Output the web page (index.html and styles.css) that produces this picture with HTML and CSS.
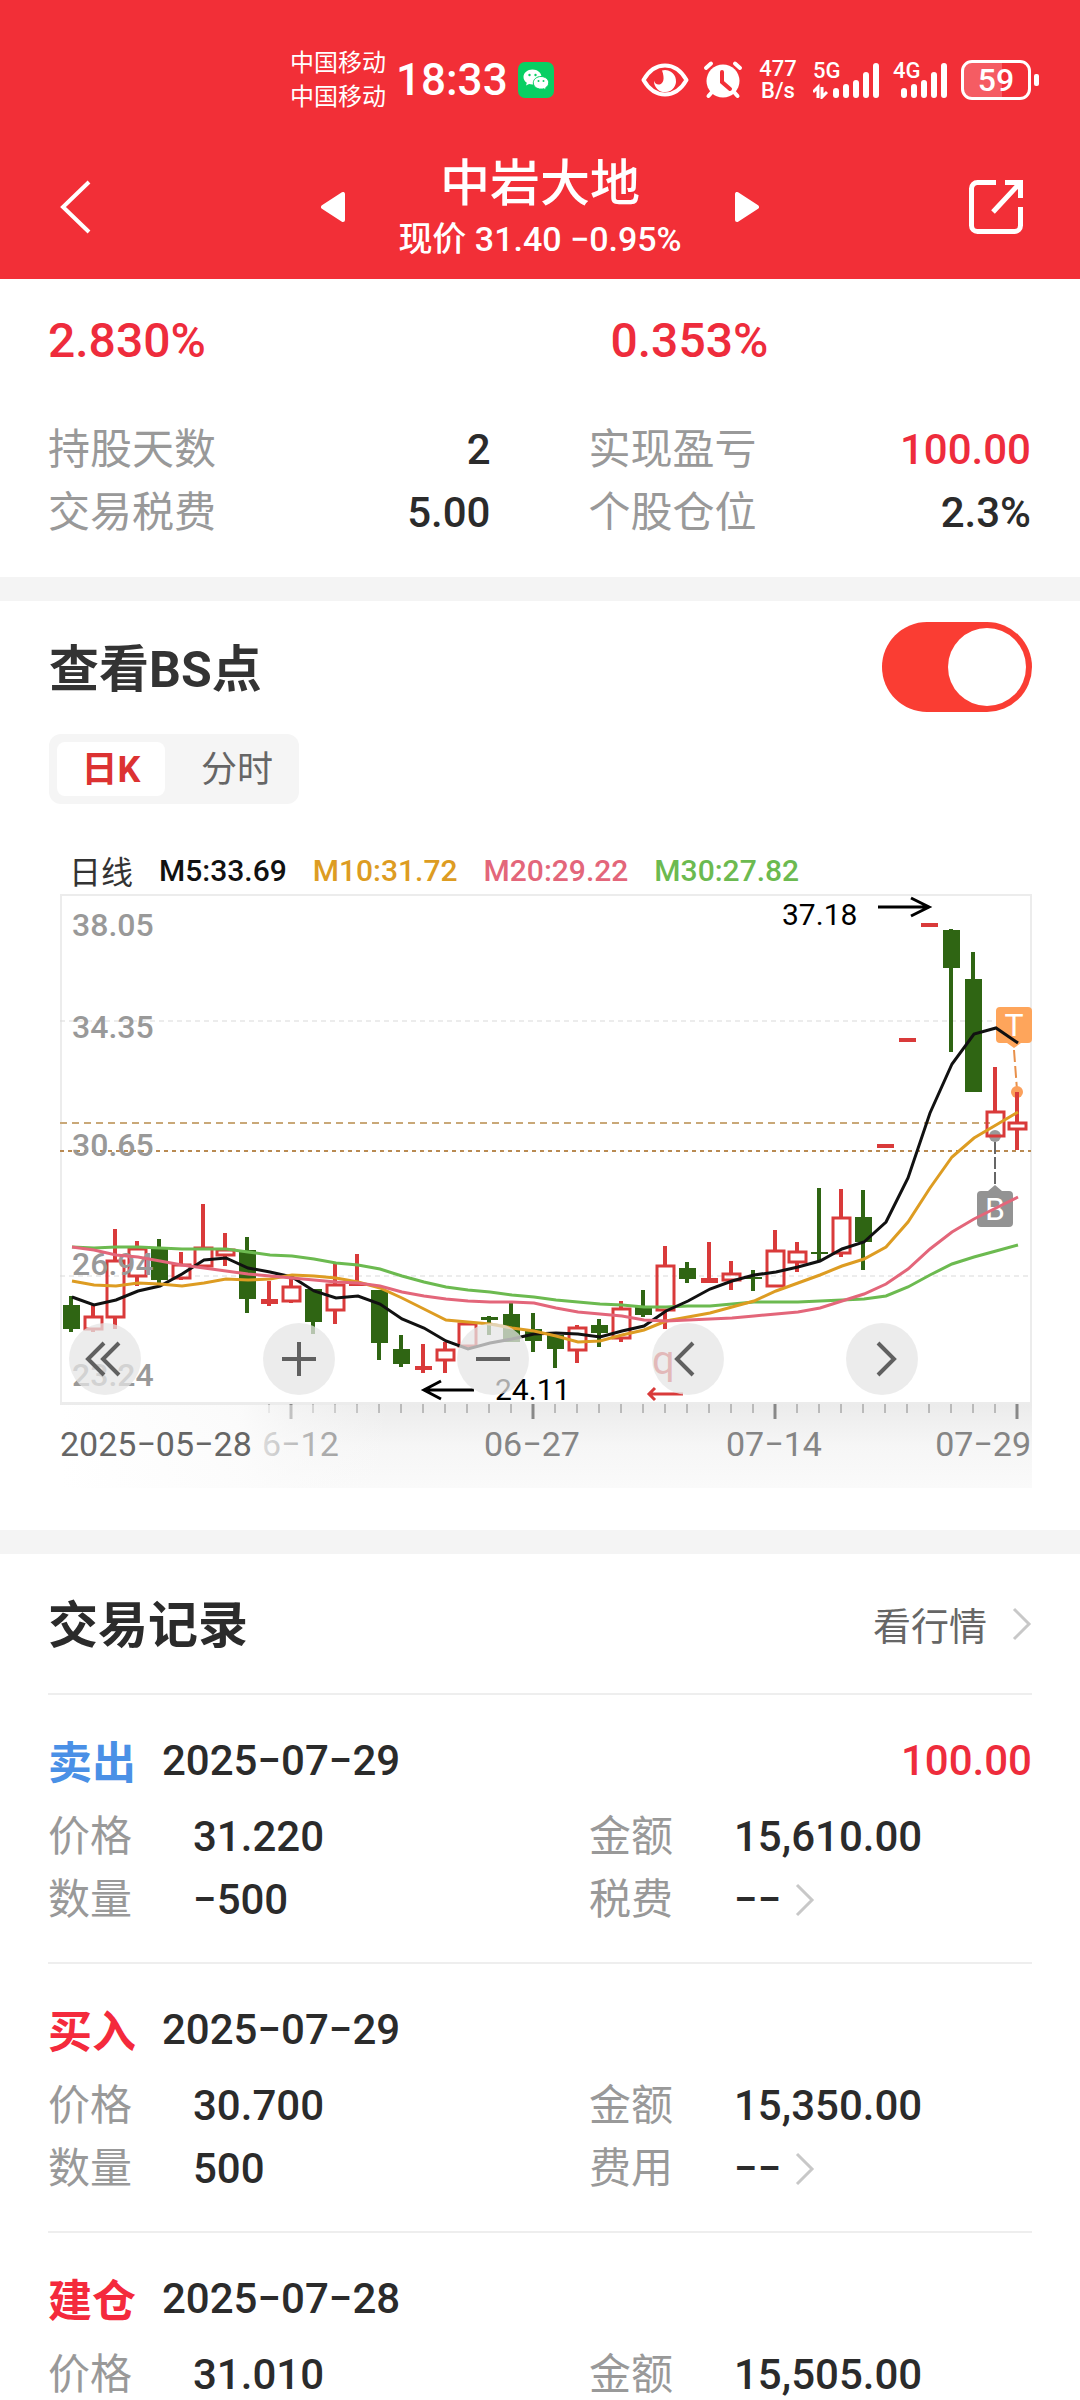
FILE: index.html
```html
<!DOCTYPE html>
<html lang="zh-CN">
<head>
<meta charset="utf-8">
<meta name="viewport" content="width=device-width">
<title>中岩大地</title>
<link rel="stylesheet" href="styles.css">
</head>
<body>
<div class="app">
  <header class="header">
    <div class="status">
      <div class="status-left">
        <div class="carriers"><span>中国移动</span><span>中国移动</span></div>
        <span class="clock">18:33</span>
        <svg class="wechat" width="36" height="36" viewBox="0 0 36 36">
          <rect width="36" height="36" rx="7" fill="#08cf63"/>
          <path d="M14.500 7.500c-5 0-9 3.300-9 7.500 0 2.400 1.300 4.400 3.300 5.800l-.8 2.600 3.100-1.500c1 .3 2.200.5 3.400.5 5 0 9-3.300 9-7.400s-4-7.500-9-7.500z" fill="#fff"/>
          <path d="M23 14.500c-4.300 0-7.700 2.800-7.700 6.300s3.400 6.300 7.700 6.300c1 0 1.900-.1 2.700-.4l2.600 1.300-.7-2.200c1.900-1.200 3.100-3 3.100-5 0-3.500-3.400-6.300-7.700-6.300z" fill="#fff" stroke="#08cf63"/>
          <g fill="#08cf63"><circle cx="11.500" cy="13" r="1.200"/><circle cx="17.500" cy="13" r="1.200"/><circle cx="20.500" cy="19" r="1"/><circle cx="25.500" cy="19" r="1"/></g>
        </svg>
      </div>
      <div class="status-right">
        <svg width="48" height="36" viewBox="0 0 48 36">
          <path d="M2.500 18C8 8.500 15 3.500 24 3.500S40 8.500 45.500 18C40 27.500 33 32.500 24 32.500S8 27.500 2.500 18z" fill="none" stroke="#fff" stroke-width="4" stroke-linejoin="round"/>
          <path d="M21 8.500a11 11 0 1 1-8 10c.5 3 3 4.500 5.500 4 4-1 5.500-6 2.500-14z" fill="#fff"/>
        </svg>
        <svg width="40" height="40" viewBox="0 0 40 40">
          <g stroke="#fff" stroke-width="4" stroke-linecap="round"><path d="M3 8l5-4.500M37 8l-5-4.500M9 32l-3.500 4M31 32l3.500 4"/></g>
          <circle cx="20" cy="21" r="16.500" fill="#fff"/>
          <path d="M19 12v10l8 7" fill="none" stroke="#f22f37" stroke-width="4" stroke-linecap="round"/>
        </svg>
        <div class="speed"><span>477</span><span>B/s</span></div>
        <div class="signal">
          <span>5G</span>
          <svg width="66" height="38" viewBox="0 0 66 38">
            <path d="M0 31l5-5v11M14 31l-5 5V26" fill="none" stroke="#fff" stroke-width="3"/>
            <g stroke="#fff" stroke-width="6" stroke-linecap="round"><path d="M23 30v4M33 26v8M43 22v12M53 14v20M63 5v29"/></g>
          </svg>
        </div>
        <div class="signal">
          <span>4G</span>
          <svg width="54" height="38" viewBox="0 0 54 38">
            <g stroke="#fff" stroke-width="6" stroke-linecap="round"><path d="M11 30v4M21 26v8M31 22v12M41 14v20M51 5v29"/></g>
          </svg>
        </div>
        <div class="battery"><span>59</span></div>
      </div>
    </div>
    <nav class="nav">
      <button class="icon-btn nav-back" aria-label="返回">
        <svg width="36" height="56" viewBox="0 0 36 56"><path d="M33 3L7 28l26 25" fill="none" stroke="#fff" stroke-width="4"/></svg>
      </button>
      <div class="nav-center">
        <button class="icon-btn" aria-label="上一只">
          <svg width="24" height="30" viewBox="0 0 24 30"><path d="M2 15L22 2v26z" fill="#fff" stroke="#fff" stroke-width="4" stroke-linejoin="round"/></svg>
        </button>
        <div class="nav-title">
          <h1>中岩大地</h1>
          <p>现价 31.40 −0.95%</p>
        </div>
        <button class="icon-btn" aria-label="下一只">
          <svg width="24" height="30" viewBox="0 0 24 30"><path d="M22 15L2 2v26z" fill="#fff" stroke="#fff" stroke-width="4" stroke-linejoin="round"/></svg>
        </button>
      </div>
      <button class="icon-btn nav-share" aria-label="分享">
        <svg width="56" height="56" viewBox="0 0 56 56">
          <g fill="none" stroke="#fff" stroke-width="5"><path d="M28 3.500H9.500a6 6 0 0 0-6 6v37a6 6 0 0 0 6 6h37a6 6 0 0 0 6-6V28"/><path d="M37 3.500h15.500V19M52 4L25 33"/></g>
        </svg>
      </button>
    </nav>
  </header>

  <main class="content">
    <section class="stats">
      <div class="columns rates"><span>2.830%</span><span class="rate-second">0.353%</span></div>
      <dl class="columns summary">
        <div><dt>持股天数</dt><dd>2</dd></div>
        <div><dt>实现盈亏</dt><dd class="red">100.00</dd></div>
        <div><dt>交易税费</dt><dd>5.00</dd></div>
        <div><dt>个股仓位</dt><dd>2.3%</dd></div>
      </dl>
    </section>

    <section class="kline">
      <div class="kline-head">
        <label for="bs">查看BS点</label>
        <input class="switch" type="checkbox" id="bs" role="switch" checked>
      </div>
      <div class="tabs">
        <button class="tab tab-active">日K</button>
        <button class="tab">分时</button>
      </div>
      <div class="legend">
        <span class="legend-name">日线</span><span class="m5">M5:33.69</span><span class="m10">M10:31.72</span><span class="m20">M20:29.22</span><span class="m30">M30:27.82</span>
      </div>
      <div class="chart">
        <svg class="chart-svg" viewBox="60 892 971 596">
          <defs>
            <linearGradient id="band" x1="0" y1="0" x2="0" y2="1"><stop offset="0" stop-color="#ebebeb"/><stop offset=".5" stop-color="#f6f6f6"/><stop offset="1" stop-color="#fafafa"/></linearGradient>
            <linearGradient id="fade"><stop offset="0" stop-color="#fff"/><stop offset=".55" stop-color="#fcfcfc" stop-opacity=".9"/><stop offset=".7" stop-color="#fbfbfb" stop-opacity=".5"/><stop offset="1" stop-color="#fafafa" stop-opacity="0"/></linearGradient>
          </defs>
          <rect x="60" y="1403" width="972" height="85" fill="url(#band)"/>
          <rect x="61" y="895" width="970" height="508" fill="#fff" stroke="#ececec" stroke-width="2"/>
          <g fill="none">
            <path d="M60 1021H1031M60 1276H1031" stroke="#d9d9d9" stroke-dasharray="5 4"/>
            <path d="M60 1123H990" stroke="#c9a878" stroke-width="2" stroke-dasharray="7 5"/>
            <path d="M60 1151H1031" stroke="#b98a52" stroke-width="2" stroke-dasharray="4 4"/>
          </g>
          <g class="bs-marks">
            <path d="M1014 1050l3 40" stroke="#e8904a" stroke-width="2" stroke-dasharray="12 4"/>
            <circle cx="1017" cy="1092" r="6" fill="#fba05c"/>
            <path d="M1000 1007h28a4 4 0 0 1 4 4v28a4 4 0 0 1-4 4h-7l-7 5-7-5h-7a4 4 0 0 1-4-4v-28a4 4 0 0 1 4-4z" fill="#fea55b"/>
            <text x="1014" y="1036">T</text>
            <path d="M995 1142v44" stroke="#666" stroke-width="2" stroke-dasharray="12 3"/>
            <circle cx="995" cy="1136" r="6" fill="#999"/>
            <path d="M981 1191h7l7-6 7 6h7a4 4 0 0 1 4 4v28a4 4 0 0 1-4 4h-28a4 4 0 0 1-4-4v-28a4 4 0 0 1 4-4z" fill="#939393"/>
            <text x="995" y="1220">B</text>
          </g>
          <g id="candles"></g>
          <g class="scale">
            <text x="72" y="936">38.05</text><text x="72" y="1038">34.35</text><text x="72" y="1156">30.65</text><text x="72" y="1275">26.94</text><text x="72" y="1386">23.24</text>
          </g>
          <g id="averages"></g>
          <g class="extremes">
            <text x="782" y="925">37.18</text><path d="M878 907H929M911 898l18 9-18 9"/>
            <text x="495" y="1400">24.11</text><path d="M474 1390H424M441 1381l-17 9 17 9"/>
          </g>
          <text class="notice" x="652" y="1374">q</text>
          <path d="M683 1394H649M655 1388l-6 6 6 6" fill="none" stroke="#d93a3a" stroke-width="3"/>
          <g id="ticks"></g>
          <g class="dates">
            <text x="262" y="1456">6−12</text><text x="484" y="1456">06−27</text><text x="726" y="1456">07−14</text><text x="1031" y="1456" text-anchor="end">07−29</text>
          </g>
          <rect x="60" y="1405" width="330" height="83" fill="url(#fade)"/>
          <text class="first-date" x="60" y="1456">2025−05−28</text>
        </svg>
        <div class="chart-tools">
          <button aria-label="最早"><svg viewBox="0 0 72 72"><path d="M35 20L19 36l16 16M50 20L34 36l16 16"/></svg></button>
          <button aria-label="放大"><svg viewBox="0 0 72 72"><path d="M36 19v34M19 36h34"/></svg></button>
          <button aria-label="缩小"><svg viewBox="0 0 72 72"><path d="M19 36h34"/></svg></button>
          <button aria-label="向左"><svg viewBox="0 0 72 72"><path d="M41 20L25 36l16 16"/></svg></button>
          <button aria-label="向右"><svg viewBox="0 0 72 72"><path d="M32 20l16 16-16 16"/></svg></button>
        </div>
      </div>
    </section>

    <section class="records">
      <div class="records-head">
        <h2>交易记录</h2>
        <a href="#">看行情<svg width="20" height="34" viewBox="0 0 20 34"><path d="M2 2l15 15L2 32"/></svg></a>
      </div>
      <article class="record">
        <div class="record-head"><strong class="sell">卖出</strong><time>2025−07−29</time><span class="profit">100.00</span></div>
        <dl class="columns">
          <div><dt>价格</dt><dd>31.220</dd></div><div><dt>金额</dt><dd>15,610.00</dd></div>
          <div><dt>数量</dt><dd>−500</dd></div><div><dt>税费</dt><dd>−−<svg width="20" height="34" viewBox="0 0 20 34"><path d="M2 2l15 15L2 32"/></svg></dd></div>
        </dl>
      </article>
      <article class="record">
        <div class="record-head"><strong>买入</strong><time>2025−07−29</time></div>
        <dl class="columns">
          <div><dt>价格</dt><dd>30.700</dd></div><div><dt>金额</dt><dd>15,350.00</dd></div>
          <div><dt>数量</dt><dd>500</dd></div><div><dt>费用</dt><dd>−−<svg width="20" height="34" viewBox="0 0 20 34"><path d="M2 2l15 15L2 32"/></svg></dd></div>
        </dl>
      </article>
      <article class="record">
        <div class="record-head"><strong>建仓</strong><time>2025−07−28</time></div>
        <dl class="columns">
          <div><dt>价格</dt><dd>31.010</dd></div><div><dt>金额</dt><dd>15,505.00</dd></div>
        </dl>
      </article>
    </section>
  </main>
</div>
<script src="chart.js"></script>
</body>
</html>
```
FILE: styles.css
```css
* { box-sizing: border-box; }

body, h1, h2, p, dl, dd { margin: 0; }

body {
  background: #fff;
  color: #2b2b2b;
  font-family: Roboto, "Noto Sans CJK SC", sans-serif;
  font-size: 42px;
}

button { border: 0; background: none; padding: 0; font: inherit; color: inherit; }
svg { display: block; }

.app { display: flex; flex-direction: column; height: 100vh; }

/* header */
.header { flex: none; background: #f22f37; color: #fff; }
.status { display: flex; justify-content: space-between; padding: 46px 41px 0 290px; height: 134px; align-items: flex-start; }
.status-left, .status-right { display: flex; align-items: center; height: 68px; }
.carriers { display: flex; flex-direction: column; font-size: 24px; line-height: 34px; }
.clock { font-size: 44px; font-weight: 500; margin: 0 10px 0 10px; }
.status-right { gap: 14px; }
.speed { display: flex; flex-direction: column; font-size: 22px; line-height: 22px; font-weight: 500; text-align: center; width: 42px; }
.signal { position: relative; }
.signal span { position: absolute; left: 0; top: -1px; font-size: 22px; line-height: 22px; font-weight: 500; }
.battery { position: relative; display: flex; align-items: center; justify-content: center; width: 70px; height: 40px; margin-right: 8px; border: 3px solid #fff; border-radius: 11px; background: linear-gradient(90deg, #f55c63 59%, transparent 59%); font-size: 32px; font-weight: 500; }
.battery::after { content: ""; position: absolute; right: -11px; top: 11px; width: 5px; height: 12px; border-radius: 2px; background: #fff; }

.nav { display: grid; grid-template-columns: 1fr auto 1fr; align-items: center; height: 145px; padding: 0 56px; }
.icon-btn { display: block; }
.nav-back { justify-self: start; }
.nav-share { justify-self: end; }
.nav-center { display: flex; align-items: center; justify-content: space-between; width: 438px; }
.nav-title { text-align: center; white-space: nowrap; }
.nav-title h1 { font-size: 50px; font-weight: 500; line-height: 64px; }
.nav-title p { font-size: 34px; font-weight: 500; line-height: 46px; }

.content { flex: 1; min-height: 0; overflow-y: auto; scrollbar-width: none; }

/* shared two-column rows */
.columns { display: grid; grid-template-columns: 1fr 1fr; column-gap: 98px; }
.columns > div { display: flex; align-items: center; height: 63px; }
dt { color: #999; line-height: 63px; }
dd { font-weight: 500; line-height: 63px; }
.red { color: #ee2c3c; }

/* stats */
.stats { padding: 32px 49px 33px 48px; }
.rates { color: #ee2c3c; font-size: 48px; line-height: 60px; font-weight: 500; margin-bottom: 47px; }
.rate-second { padding-left: 22px; }
.summary > div { justify-content: space-between; }

/* k-line */
.kline { border-top: 24px solid #f4f4f4; padding: 21px 49px 42px; }
.kline-head { display: flex; align-items: center; justify-content: space-between; height: 90px; font-size: 50px; font-weight: 700; }
.kline-head label { padding-bottom: 5px; color: #333; }
.switch { appearance: none; margin: 0 -1px 0 0; width: 150px; height: 90px; border-radius: 45px; background: #fa3d33; padding: 6px; display: flex; justify-content: flex-start; }
.switch::before { content: ""; width: 78px; height: 78px; border-radius: 50%; background: #fff; }
.switch:checked { justify-content: flex-end; }
.tabs { display: flex; gap: 18px; width: fit-content; margin-top: 22px; padding: 8px; border-radius: 12px; background: #f5f5f5; }
.tab { width: 108px; height: 54px; border-radius: 8px; font-size: 36px; line-height: 56px; color: #666; }
.tab-active { background: #fff; color: #dc3232; font-weight: 700; }
.legend { display: flex; align-items: center; gap: 26px; height: 40px; margin: 46px 0 2px; padding-left: 20px; font-size: 30px; font-weight: 500; white-space: nowrap; }
.legend-name { color: #333; font-size: 32px; font-weight: 400; }
.m5 { color: #111; } .m10 { color: #dd9c22; } .m20 { color: #e3667a; } .m30 { color: #6cba50; }

.chart { position: relative; margin-left: 11px; }
.chart-svg { width: 100%; overflow: visible; }
.scale { font-size: 32px; fill: #999; font-weight: 500; }
.dates { font-size: 34px; fill: #858585; }
.first-date { font-size: 34px; fill: #666; }
.bs-marks text { font-size: 32px; fill: #fff; text-anchor: middle; }
.extremes { font-size: 30px; fill: #000; }
.extremes path { fill: none; stroke: #000; stroke-width: 3; }
.notice { font-size: 40px; fill: #d93a3a; }
.ma { fill: none; stroke-width: 3; }
.ma5 { stroke: #111; } .ma10 { stroke: #dd9c22; } .ma20 { stroke: #e3667a; } .ma30 { stroke: #6cba50; }
.up { stroke: #d93a3a; fill: none; }
.up-flat { stroke: #d93a3a; fill: #d93a3a; }
.down { stroke: #2f6513; fill: #2f6513; }

.chart-tools { position: absolute; left: 9px; right: -9px; bottom: 93px; display: grid; grid-template-columns: repeat(5, 1fr); }
.chart-tools button { width: 72px; height: 72px; border-radius: 50%; background: rgba(230, 230, 230, .74); }
.chart-tools path { fill: none; stroke: #606060; stroke-width: 4; }

/* records */
.records { border-top: 24px solid #f4f4f4; padding: 0 48px; }
.records-head { display: flex; align-items: center; justify-content: space-between; height: 139px; }
.records-head h2 { font-size: 50px; font-weight: 700; padding-bottom: 5px; }
.records-head a { display: flex; align-items: center; gap: 25px; font-size: 38px; color: #666; text-decoration: none; }
.records svg path { fill: none; stroke: #c8c8c8; stroke-width: 3; }
.record { border-top: 2px solid #eee; padding: 32px 0 31px; }
.record-head { display: flex; align-items: center; height: 66px; margin-bottom: 12px; font-weight: 500; }
.record-head strong { width: 114px; font-size: 44px; color: #f42a3c; }
.record-head .sell { color: #4a90e6; }
.profit { margin-left: auto; color: #ee2c3c; }
.record dt { width: 145px; }
.record dd { display: flex; align-items: center; gap: 14px; }
```
FILE: chart.js
```js
// Candles: direction (u = up, f = filled up, d = down), wick top, wick bottom, body top, body bottom.
const candles = [
  ["d",1296,1332,1305,1329],["u",1305,1332,1316,1330],["u",1229,1329,1260,1318],["u",1241,1286,1248,1277],
  ["d",1239,1285,1249,1280],["u",1252,1280,1264,1279],["u",1204,1267,1247,1267],["u",1233,1266,1249,1256],
  ["d",1237,1313,1250,1299],["f",1281,1306,1299,1304],["u",1278,1303,1286,1302],["d",1289,1334,1289,1322],
  ["u",1264,1324,1284,1311],["f",1254,1286,1283,1286],["d",1290,1360,1290,1343],["d",1335,1367,1349,1364],
  ["f",1344,1373,1366,1370],["u",1342,1373,1349,1361],["u",1323,1347,1323,1347],["d",1316,1335,1317,1320],
  ["d",1303,1342,1314,1342],["d",1313,1352,1329,1341],["d",1335,1368,1335,1349],["u",1325,1363,1327,1351],
  ["d",1319,1347,1325,1333],["u",1301,1342,1308,1339],["d",1290,1317,1307,1315],["u",1246,1329,1265,1311],
  ["d",1262,1283,1268,1279],["f",1242,1283,1278,1283],["u",1261,1290,1273,1281],["d",1270,1291,1277,1279],
  ["u",1230,1287,1250,1287],["u",1242,1272,1251,1263],["d",1188,1262,1252,1254],["u",1189,1257,1217,1254],
  ["d",1190,1270,1217,1242],["f",1144,1148,1144,1148],["f",1038,1042,1038,1042],["f",923,927,923,927],
  ["d",929,1052,930,968],["d",952,1092,979,1092],["u",1067,1137,1111,1137],["u",1092,1150,1122,1130]
];
const averages = {
  ma30: [1247,1248,1247,1247,1248,1249,1249,1249,1252,1255,1256,1259,1263,1265,1269,1276,1282,1287,1290,1292,1295,1297,1300,1302,1304,1305,1307,1307,1306,1306,1304,1302,1302,1302,1301,1300,1299,1296,1287,1275,1264,1257,1251,1245],
  ma5: [1297,1305,1300,1291,1286,1274,1260,1258,1268,1272,1277,1291,1298,1296,1304,1319,1328,1341,1349,1343,1339,1334,1333,1334,1337,1331,1326,1311,1301,1289,1281,1275,1272,1267,1261,1249,1242,1222,1178,1113,1064,1034,1028,1043],
  ma10: [1281,1285,1286,1283,1284,1286,1283,1279,1280,1279,1275,1276,1278,1282,1288,1298,1309,1320,1322,1324,1328,1331,1336,1342,1341,1335,1330,1321,1317,1313,1307,1301,1291,1283,1275,1266,1259,1247,1222,1188,1157,1138,1125,1112],
  ma20: [1247,1250,1255,1257,1261,1265,1268,1271,1274,1276,1278,1280,1282,1283,1286,1292,1296,1299,1301,1302,1302,1303,1308,1312,1314,1316,1320,1321,1320,1319,1318,1316,1314,1312,1308,1301,1294,1284,1269,1249,1232,1219,1208,1197]
};
const centre = i => 71 + 22 * i;
const classes = { u: "up", f: "up-flat", d: "down" };

document.getElementById("candles").innerHTML = candles.map(([kind, high, low, top, bottom], i) => {
  const x = centre(i);
  const hollow = kind === "u";
  const wick = hollow ? `M${x} ${high}V${top}M${x} ${bottom}V${low}` : `M${x} ${high}V${low}`;
  const body = hollow
    ? `<rect x="${x - 8}" y="${top + 1}" width="17" height="${bottom - top - 2}" stroke-width="3"/>`
    : `<rect x="${x - 8}" y="${top}" width="17" height="${bottom - top}" stroke-width="0"/>`;
  return `<g class="${classes[kind]}"><path d="${wick}" stroke-width="4"/>${body}</g>`;
}).join("");

document.getElementById("averages").innerHTML = Object.entries(averages).map(([name, values]) =>
  `<polyline class="ma ${name}" points="${values.map((y, i) => `${centre(i) + 1},${y}`).join(" ")}"/>`
).join("");

let ticks = "";
for (let i = 9; i < candles.length; i++) {
  const major = i % 11 === 10;
  ticks += `<path d="M${centre(i)} 1404V${major ? 1419 : 1413}" stroke="#888" stroke-width="${major ? 3 : 1}"/>`;
}
document.getElementById("ticks").innerHTML = ticks;
```
